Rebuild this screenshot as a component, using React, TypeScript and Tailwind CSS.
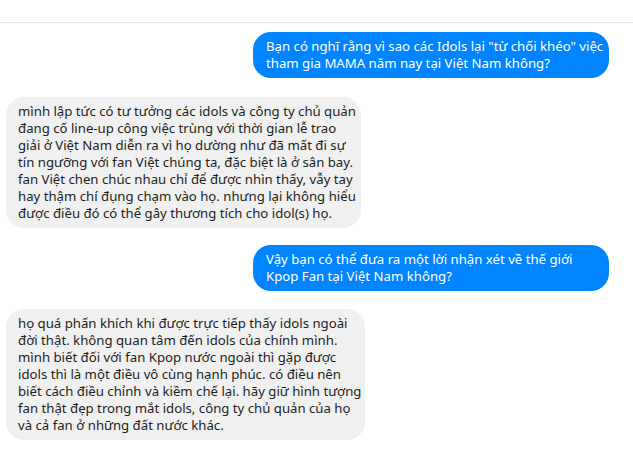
const sent = (lines: string[], key: string) => (
  <div key={key} className="flex justify-end pr-6">
    <div className="w-[356px] rounded-[18px] bg-[#0084ff] px-[13px] py-[6px] text-white">
      {lines.map((l, i) => (
        <div key={i} className="whitespace-nowrap">{l}</div>
      ))}
    </div>
  </div>
);

const received = (lines: string[], w: string) => (
  <div className="flex justify-start pl-[6px]">
    <div className={`${w} rounded-[18px] bg-[#f0f0f0] px-3 py-[6px] text-[#1c1e21]`}>
      {lines.map((l, i) => (
        <div key={i} className="whitespace-nowrap">{l}</div>
      ))}
    </div>
  </div>
);

export default function App() {
  return (
    <div className="h-[450px] w-[633px] overflow-hidden bg-white font-['Noto_Sans',sans-serif] text-[13.2px] leading-[17px]">
      <div className="h-[23px] border-b border-[#e4e4e4]" />
      <div className="flex flex-col pt-[9px]">
        {sent(
          [
            'Bạn có nghĩ rằng vì sao các Idols lại "từ chối khéo" việc',
            'tham gia MAMA năm nay tại Việt Nam không?',
          ],
          'a'
        )}
        <div className="mt-[19px]">
          {received(
            [
              'mình lập tức có tư tưởng các idols và công ty chủ quản',
              'đang cố line-up công việc trùng với thời gian lễ trao',
              'giải ở Việt Nam diễn ra vì họ dường như đã mất đi sự',
              'tín ngưỡng với fan Việt chúng ta, đặc biệt là ở sân bay.',
              'fan Việt chen chúc nhau chỉ để được nhìn thấy, vẫy tay',
              'hay thậm chí đụng chạm vào họ. nhưng lại không hiểu',
              'được điều đó có thể gây thương tích cho idol(s) họ.',
            ],
            'w-[355px]'
          )}
        </div>
        <div className="mt-[17px]">
          {sent(
            [
              'Vậy bạn có thể đưa ra một lời nhận xét về thế giới',
              'Kpop Fan tại Việt Nam không?',
            ],
            'b'
          )}
        </div>
        <div className="mt-[18px]">
          {received(
            [
              'họ quá phấn khích khi được trực tiếp thấy idols ngoài',
              'đời thật. không quan tâm đến idols của chính mình.',
              'mình biết đối với fan Kpop nước ngoài thì gặp được',
              'idols thì là một điều vô cùng hạnh phúc. có điều nên',
              'biết cách điều chỉnh và kiềm chế lại. hãy giữ hình tượng',
              'fan thật đẹp trong mắt idols, công ty chủ quản của họ',
              'và cả fan ở những đất nước khác.',
            ],
            'w-[359px]'
          )}
        </div>
      </div>
    </div>
  );
}
